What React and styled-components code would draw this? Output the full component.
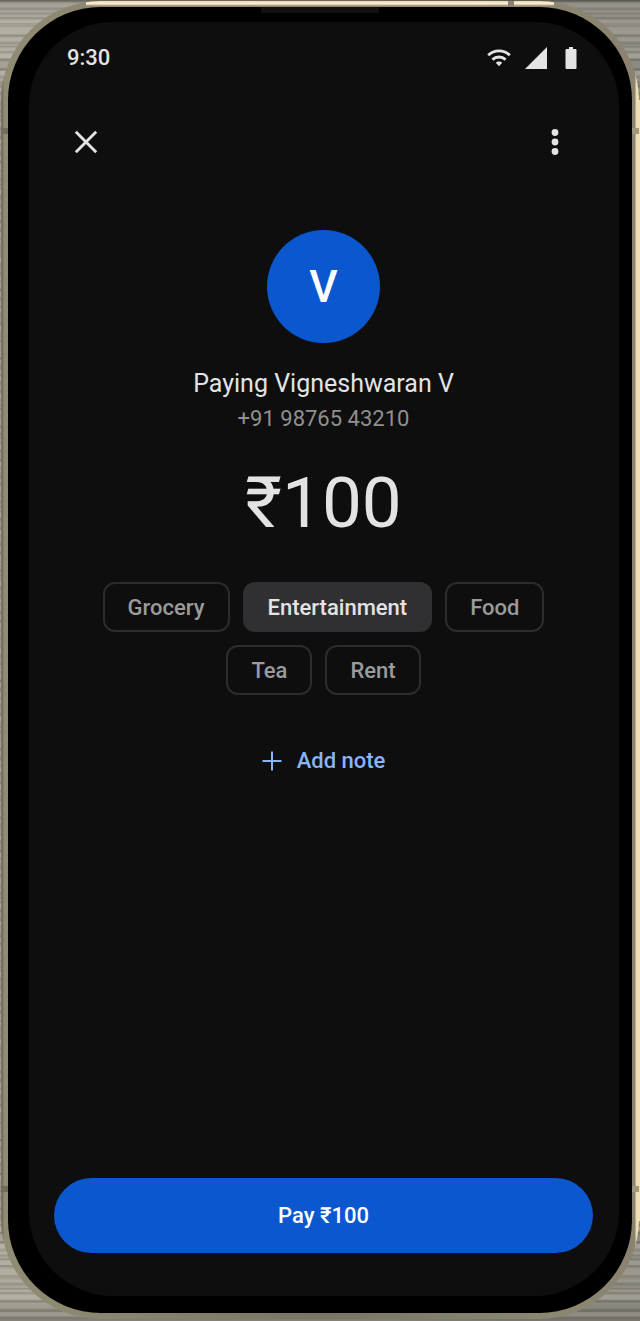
import { useState } from "react";
import styled, { createGlobalStyle } from "styled-components";

const tags = ["Grocery", "Entertainment", "Food", "Tea", "Rent"];

const payee = {
  name: "Vigneshwaran V",
  initial: "V",
  phone: "+91 98765 43210",
  amount: "₹100",
};

const StatusIcons = () => (
  <StatusIconsContainer>
    <svg width="24" height="22" viewBox="0 0 24 22" aria-hidden="true">
      <path
        d="M1.2 8.2C7.2 2.3 16.8 2.3 22.8 8.2"
        fill="none"
        stroke="#e3e3e3"
        strokeWidth="2.8"
      />
      <path
        d="M5.4 12.6C9.2 9.1 14.8 9.1 18.6 12.6"
        fill="none"
        stroke="#e3e3e3"
        strokeWidth="2.8"
      />
      <path d="M8.8 15.8C10.5 14 13.5 14 15.2 15.8L12 19.2Z" fill="#e3e3e3" />
    </svg>
    <svg width="22" height="22" viewBox="0 0 22 22" aria-hidden="true">
      <path d="M22 0V22H0Z" fill="#e3e3e3" />
    </svg>
    <svg width="12" height="22" viewBox="0 0 12 22" aria-hidden="true">
      <path
        d="M4 0H8V2H10.5A1 1 0 0 1 11.5 3V21A1 1 0 0 1 10.5 22H1.5A1 1 0 0 1 .5 21V3A1 1 0 0 1 1.5 2H4Z"
        fill="#e3e3e3"
      />
    </svg>
  </StatusIconsContainer>
);

const App = () => {
  const [selectedTag, setSelectedTag] = useState("Entertainment");

  return (
    <>
      <GlobalStyle />
      <Page>
        <Frame>
          <Bezel>
            <Screen>
              <StatusBar>
                <span>9:30</span>
                <StatusIcons />
              </StatusBar>

              <TopBar>
                <IconButton type="button" aria-label="Close">
                  <svg width="24" height="24" viewBox="0 0 24 24">
                    <path
                      d="M1.8 1.8L22.2 22.2M22.2 1.8L1.8 22.2"
                      stroke="#e3e3e3"
                      strokeWidth="2.9"
                    />
                  </svg>
                </IconButton>
                <IconButton type="button" aria-label="More options">
                  <svg width="8" height="26" viewBox="0 0 8 26">
                    <circle cx="4" cy="3.5" r="3.4" fill="#e3e3e3" />
                    <circle cx="4" cy="13" r="3.4" fill="#e3e3e3" />
                    <circle cx="4" cy="22.5" r="3.4" fill="#e3e3e3" />
                  </svg>
                </IconButton>
              </TopBar>

              <Content>
                <Avatar>{payee.initial}</Avatar>
                <PayeeName>Paying {payee.name}</PayeeName>
                <PayeePhone>{payee.phone}</PayeePhone>
                <Amount>{payee.amount}</Amount>

                <TagList>
                  {tags.map((tag) => (
                    <Tag
                      key={tag}
                      type="button"
                      $selected={tag === selectedTag}
                      aria-pressed={tag === selectedTag}
                      onClick={() => setSelectedTag(tag)}
                    >
                      {tag}
                    </Tag>
                  ))}
                </TagList>

                <AddNoteButton type="button">
                  <svg width="20" height="20" viewBox="0 0 20 20">
                    <path
                      d="M10 .5V19.5M.5 10H19.5"
                      stroke="#8ab4f8"
                      strokeWidth="2"
                    />
                  </svg>
                  Add note
                </AddNoteButton>
              </Content>

              <PayButton type="button">Pay {payee.amount}</PayButton>
            </Screen>
          </Bezel>
        </Frame>
      </Page>
    </>
  );
};

export default App;

const GlobalStyle = createGlobalStyle`
  * {
    box-sizing: border-box;
  }

  body {
    margin: 0;
    font-family: Roboto, "Noto Sans", sans-serif;
  }

  button {
    font-family: inherit;
    cursor: pointer;
  }
`;

/* Brushed metal: two stripe patterns of different lengths, so they never line up */
const Page = styled.div`
  display: flex;
  min-height: 100vh;
  padding: 1px 1px 2px;
  background:
    linear-gradient(#eedfb6, #eedfb6) 100% 50% / 5px calc(100% - 200px)
      no-repeat,
    repeating-linear-gradient(
      180deg,
      rgba(60, 58, 50, 0.15) 0 2px,
      rgba(230, 226, 210, 0.16) 3px 7px,
      rgba(70, 68, 60, 0.12) 8px 10px,
      rgba(230, 226, 210, 0.05) 11px 17px
    ),
    repeating-linear-gradient(
      180deg,
      rgba(60, 58, 50, 0.2) 0 1px,
      rgba(230, 226, 210, 0.12) 2px 12px,
      rgba(60, 58, 50, 0.15) 13px 14px,
      rgba(230, 226, 210, 0) 15px 23px
    ),
    linear-gradient(90deg, rgba(60, 60, 60, 0) 60%, rgba(60, 60, 60, 0.25) 80%),
    linear-gradient(
      180deg,
      #7f7c75 0,
      #a8a499 16px,
      #a8a499 40px,
      #96938a 110px,
      #96938a calc(100% - 120px),
      #a9a698 calc(100% - 60px),
      #a09c90 calc(100% - 16px),
      #6f6c64 100%
    );
`;

/* Metal rim, with the antenna lines painted over it */
const Frame = styled.div`
  flex-grow: 1;
  display: flex;
  padding: 6px 7px;
  border-radius: 100px;
  background:
    linear-gradient(#8b8270, #8b8270) 507px 0 / 6px 7px no-repeat,
    linear-gradient(#716c5b, #716c5b) 0 127px / 7px 6px no-repeat,
    linear-gradient(#a0967c, #a0967c) 100% 127px / 7px 6px no-repeat,
    linear-gradient(#716c5b, #716c5b) 0 calc(100% - 127px) / 7px 6px no-repeat,
    linear-gradient(#a0967c, #a0967c) 100% calc(100% - 127px) / 7px 6px
      no-repeat,
    linear-gradient(180deg, #e6d9b3 0, #fff4d3 3px, #b9ac8c 4px, #857c68 6px)
      50% 0 / calc(100% - 170px) 6px no-repeat,
    linear-gradient(
      90deg,
      #77725f 0,
      #77725f 2px,
      #918d74 3px,
      #8b8770 90px,
      #7a7562 50%,
      #8b8770 calc(100% - 90px),
      #8b8270 calc(100% - 4px),
      #ecdcb1 calc(100% - 3px),
      #f3e2b8 100%
    );
`;

const Bezel = styled.div`
  flex-grow: 1;
  display: flex;
  padding: 15px 13px 17px 21px;
  border-radius: 93px;
  background:
    linear-gradient(#101010, #101010) 50% 0 / 118px 6px no-repeat,
    #000;
`;

const Screen = styled.main`
  flex-grow: 1;
  display: flex;
  flex-direction: column;
  padding: 23px 26px 43px 25px;
  border-radius: 84px;
  background-color: #0d0e0d;
`;

const StatusBar = styled.div`
  display: flex;
  justify-content: space-between;
  align-items: center;
  height: 26px;
  padding: 0 16px 0 13px;
  color: #e3e3e3;
  font-size: 22px;
  font-weight: 500;
  line-height: 26px;
`;

const StatusIconsContainer = styled.div`
  display: flex;
  align-items: center;
  gap: 16px;

  svg:first-child {
    margin-right: -2px;
  }

  svg:last-child {
    margin-left: 2px;
  }
`;

const TopBar = styled.div`
  display: flex;
  justify-content: space-between;
  margin-top: 47px;
  padding: 0 14px 0 8px;
`;

const IconButton = styled.button`
  display: flex;
  align-items: center;
  justify-content: center;
  width: 48px;
  height: 48px;
  padding: 0;
  border: none;
  background: none;
`;

const Content = styled.div`
  flex-grow: 1;
  display: flex;
  flex-direction: column;
  align-items: center;
  margin-top: 64px;
`;

const Avatar = styled.div`
  display: flex;
  align-items: center;
  justify-content: center;
  width: 113px;
  height: 113px;
  border-radius: 50%;
  background-color: #0b57d0;
  color: #fff;
  font-size: 44px;
  font-weight: 500;
`;

const PayeeName = styled.h1`
  margin: 24px 0 0;
  color: #e3e3e3;
  font-size: 25px;
  font-weight: 400;
  line-height: 34px;
`;

const PayeePhone = styled.p`
  margin: 4px 0 0;
  color: #8e918f;
  font-size: 22px;
  line-height: 28px;
`;

const Amount = styled.p`
  margin: 28px 0 0;
  color: #e3e3e3;
  font-size: 71px;
  line-height: 84px;
`;

const TagList = styled.div`
  display: flex;
  flex-wrap: wrap;
  justify-content: center;
  gap: 13px;
  max-width: 480px;
  margin-top: 37px;
`;

const Tag = styled.button`
  height: 50px;
  padding: 0 23px;
  border: 2px solid ${({ $selected }) => ($selected ? "#303032" : "#2b2d2c")};
  border-radius: 12px;
  background-color: ${({ $selected }) => ($selected ? "#303032" : "transparent")};
  color: ${({ $selected }) => ($selected ? "#e3e3e3" : "#9a9b9c")};
  font-size: 22px;
  font-weight: 500;
`;

const AddNoteButton = styled.button`
  display: flex;
  align-items: center;
  gap: 15px;
  margin-top: 48px;
  padding: 5px 0;
  border: none;
  background: none;
  color: #8ab4f8;
  font-size: 22px;
  font-weight: 500;
  line-height: 26px;
`;

const PayButton = styled.button`
  height: 75px;
  border: none;
  border-radius: 38px;
  background-color: #0b57d0;
  color: #fff;
  font-size: 22px;
  font-weight: 500;
`;
